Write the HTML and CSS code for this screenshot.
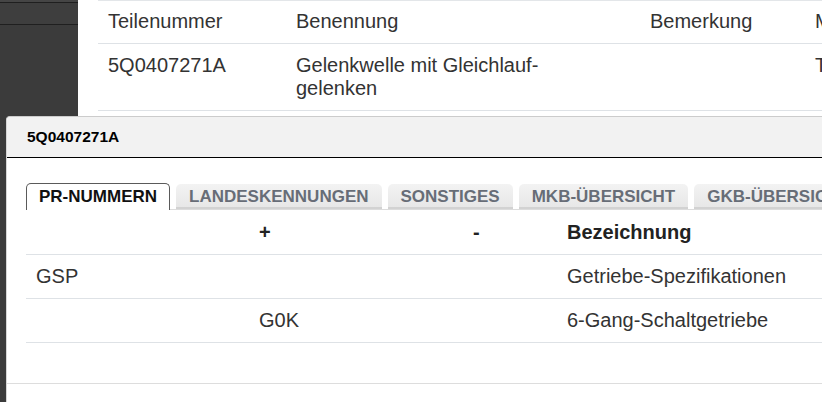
FILE: index.html
```html
<!DOCTYPE html>
<html lang="de">
<head>
<meta charset="utf-8">
<title>Teile</title>
<link rel="stylesheet" href="styles.css">
</head>
<body>
<div class="page">
  <aside class="sidebar">
    <div class="side-top"></div>
    <div class="side-item"></div>
  </aside>
  <main class="main">
    <table class="parts">
      <colgroup><col class="c1"><col class="c2"><col class="c3"><col class="c4"></colgroup>
      <thead>
        <tr><th>Teilenummer</th><th>Benennung</th><th>Bemerkung</th><th>Menge</th></tr>
      </thead>
      <tbody>
        <tr><td>5Q0407271A</td><td>Gelenkwelle mit Gleichlauf-<br>gelenken</td><td></td><td>Teil</td></tr>
      </tbody>
    </table>
  </main>
</div>

<div class="modal">
  <div class="modal-header">5Q0407271A</div>
  <div class="modal-body">
    <ul class="tabs">
      <li class="tab active">PR-NUMMERN</li>
      <li class="tab">LANDESKENNUNGEN</li>
      <li class="tab">SONSTIGES</li>
      <li class="tab">MKB-ÜBERSICHT</li>
      <li class="tab">GKB-ÜBERSICHT</li>
    </ul>
    <table class="pr">
      <colgroup><col class="p1"><col class="p2"><col class="p3"><col class="p4"></colgroup>
      <thead>
        <tr><th></th><th>+</th><th>-</th><th>Bezeichnung</th></tr>
      </thead>
      <tbody>
        <tr><td>GSP</td><td></td><td></td><td>Getriebe-Spezifikationen</td></tr>
        <tr><td></td><td>G0K</td><td></td><td>6-Gang-Schaltgetriebe</td></tr>
      </tbody>
    </table>
  </div>
  <div class="modal-footer"></div>
</div>
</body>
</html>
```

FILE: styles.css
```css
html, body {
  margin: 0;
  padding: 0;
  height: 100%;
  overflow: hidden;
  background: #ffffff;
  font-family: "Liberation Sans", Arial, Helvetica, sans-serif;
  color: #333333;
}

.page {
  display: flex;
  height: 402px;
}

.sidebar {
  width: 78px;
  flex: 0 0 78px;
  background: #3b3b3b;
}

.side-top {
  height: 2px;
  background: #454545;
  border-bottom: 1px solid #1f1f1f;
}

.side-item {
  height: 21px;
  background: #3e3e3e;
  border-bottom: 1px solid #1f1f1f;
}

.main {
  flex: 1;
  padding-left: 20px;
  overflow: hidden;
}

.parts {
  border-collapse: collapse;
  table-layout: fixed;
  width: 900px;
  font-size: 20px;
  border-top: 1px solid #e3e6e9;
  margin-top: 0;
}

.parts .c1 { width: 188px; }
.parts .c2 { width: 354px; }
.parts .c3 { width: 165px; }
.parts .c4 { width: 193px; }

.parts th,
.parts td {
  text-align: left;
  font-weight: normal;
  vertical-align: top;
  line-height: 23px;
  padding: 9px 10px 10px;
  border-bottom: 1px solid #dee2e6;
  white-space: nowrap;
}

.parts td {
  padding: 10px 10px 10px;
}

.modal {
  position: absolute;
  left: 6px;
  top: 116px;
  width: 1000px;
  bottom: 0;
  background: #ffffff;
  border-top: 1px solid #cccccc;
  border-left: 1px solid #d6d6d6;
  border-top-left-radius: 4px;
  display: flex;
  flex-direction: column;
}

.modal-header {
  height: 40px;
  line-height: 40px;
  background: #f2f2f2;
  border-bottom: 1px solid #000000;
  border-top-left-radius: 4px;
  padding-left: 20px;
  font-size: 15.5px;
  font-weight: bold;
  color: #000000;
}

.modal-body {
  padding: 24px 0 0 19px;
  flex: 0 0 auto;
  height: 201px;
}

.tabs {
  list-style: none;
  margin: 0;
  padding: 0;
  display: flex;
  gap: 6px;
  border-bottom: 1px solid #dcdcdc;
  height: 27px;
  align-items: flex-end;
}

.tab {
  height: 25px;
  line-height: 26px;
  padding: 0 13px;
  font-size: 17px;
  font-weight: bold;
  color: #676d77;
  white-space: nowrap;
  background: linear-gradient(#f3f3f3, #e6e6e6);
  border-radius: 5px 5px 0 0;
  box-shadow: inset 0 -2px 0 #d2d2d2;
  margin-bottom: 0;
}

.tab.active {
  height: 26px;
  color: #111111;
  background: #ffffff;
  border: 1px solid #5a5a5a;
  border-bottom: none;
  box-shadow: none;
  padding: 0 12px;
  margin-bottom: -1px;
}

.pr {
  border-collapse: collapse;
  table-layout: fixed;
  width: 900px;
  font-size: 20px;
}

.pr .p1 { width: 223px; }
.pr .p2 { width: 214px; }
.pr .p3 { width: 94px; }
.pr .p4 { width: 369px; }

.pr th,
.pr td {
  text-align: left;
  line-height: 23px;
  padding: 10px 10px 10px;
  border-bottom: 1px solid #dee2e6;
  white-space: nowrap;
  color: #333333;
}

.pr th {
  font-weight: bold;
  color: #222222;
  padding: 11px 10px 10px;
}

.modal-footer {
  border-top: 1px solid #dddddd;
  margin-top: auto;
  height: 18px;
}
```
